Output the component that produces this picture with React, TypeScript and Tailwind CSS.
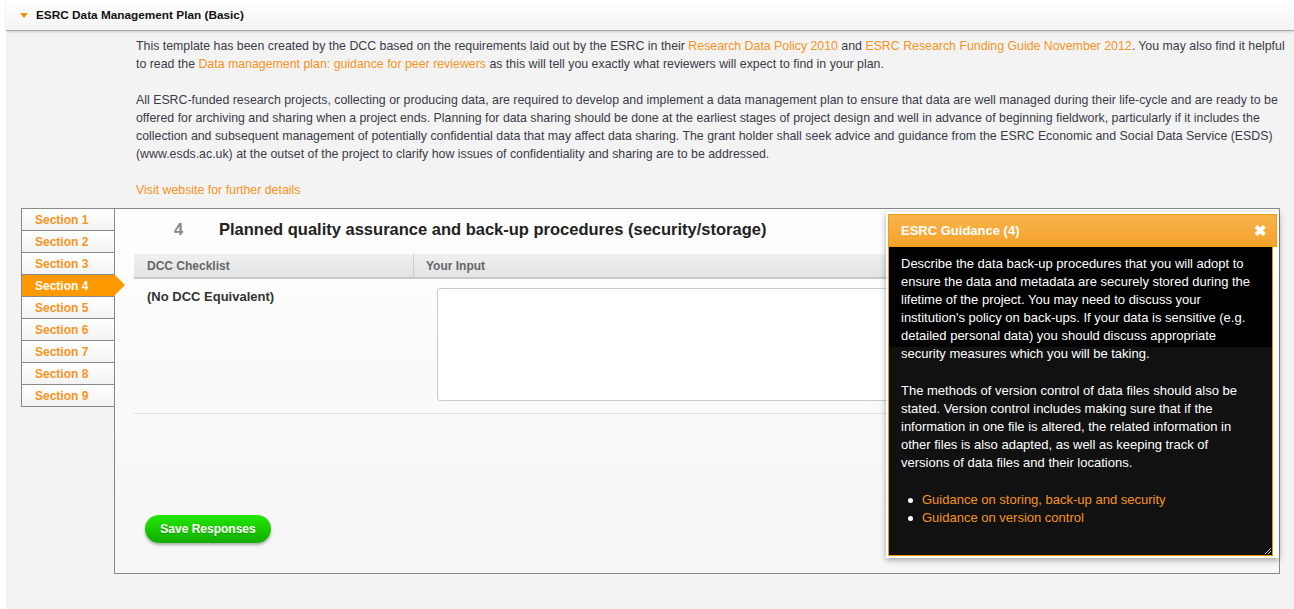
import React from "react";

const sections = [1, 2, 3, 4, 5, 6, 7, 8, 9];

function Link({ children }: { children: React.ReactNode }) {
  return <a className="text-[#f7941d]">{children}</a>;
}

export default function App() {
  return (
    <div className="min-h-[609px] bg-white font-['Liberation_Sans',Arial,sans-serif] text-[12px] leading-[18px] text-[#3b3b48]">
      <div className="ml-[6px] min-h-[609px] bg-[#f3f3f3]">
        {/* header */}
        <div className="flex h-[31px] items-center border-b border-[#a9a9a9] bg-gradient-to-b from-white to-[#f4f4f4] pl-[14px] shadow-[0_1px_2px_rgba(0,0,0,0.15)]">
          <span className="mr-[8px] h-0 w-0 border-x-[4px] border-t-[5px] border-x-transparent border-t-[#f39200]" />
          <span className="text-[11.8px] font-bold text-[#111]">ESRC Data Management Plan (Basic)</span>
        </div>

        {/* intro */}
        <div className="whitespace-nowrap pl-[130px] pt-[6px] text-[12.35px]">
          <p>
            This template has been created by the DCC based on the requirements laid out by the ESRC in their{" "}
            <Link>Research Data Policy 2010</Link> and <Link>ESRC Research Funding Guide November 2012</Link>. You may also find it helpful
            <br />
            to read the <Link>Data management plan: guidance for peer reviewers</Link> as this will tell you exactly what reviewers will expect to find in your plan.
          </p>
          <p className="mt-[18px]">
            All ESRC-funded research projects, collecting or producing data, are required to develop and implement a data management plan to ensure that data are well managed during their life-cycle and are ready to be
            <br />
            offered for archiving and sharing when a project ends. Planning for data sharing should be done at the earliest stages of project design and well in advance of beginning fieldwork, particularly if it includes the
            <br />
            collection and subsequent management of potentially confidential data that may affect data sharing. The grant holder shall seek advice and guidance from the ESRC Economic and Social Data Service (ESDS)
            <br />
            (www.esds.ac.uk) at the outset of the project to clarify how issues of confidentiality and sharing are to be addressed.
          </p>
          <p className="mt-[18px]">
            <Link>Visit website for further details</Link>
          </p>
        </div>

        {/* main box */}
        <div className="relative ml-[15px] mr-[14px] mt-[9px] flex">
          {/* section nav */}
          <div className="z-10 -mr-px flex w-[94px] shrink-0 flex-col self-start">
            {sections.map((n) => {
              const active = n === 4;
              return (
                <div
                  key={n}
                  className={
                    active
                      ? "relative -mt-px flex h-[23px] items-center border border-[#888] bg-[#f90] pl-[13px] font-bold text-white first:mt-0"
                      : "relative -mt-px flex h-[23px] items-center border border-[#888] bg-gradient-to-b from-white to-[#f3f3f3] pl-[13px] font-bold text-[#f7941d] first:mt-0"
                  }
                >
                  Section {n}
                  {active && (
                    <span className="absolute left-full top-[-1px] h-0 w-0 border-y-[11.5px] border-l-[11px] border-y-transparent border-l-[#f90]" />
                  )}
                </div>
              );
            })}
          </div>

          {/* content panel */}
          <div className="h-[366px] flex-1 border border-[#888] bg-gradient-to-b from-[#fefefe] to-[#f6f6f6] pl-[19px] pr-[18px]">
            <div className="flex h-[45px] items-center pb-[5px] text-[16.5px] font-bold">
              <span className="w-[40px]" />
              <span className="w-[45px] text-[#888]">4</span>
              <span className="text-[#222]">Planned quality assurance and back-up procedures (security/storage)</span>
            </div>
            <div className="flex h-[25px] border-b-2 border-[#c8c8c8] bg-gradient-to-b from-[#f0f0f0] to-[#e2e3e5] font-bold text-[#666]">
              <div className="flex w-[280px] items-center border-r border-[#cfcfcf] pl-[13px]">DCC Checklist</div>
              <div className="flex items-center pl-[12px]">Your Input</div>
            </div>
            <div className="flex h-[135px] border-b border-[#e2e2e2]">
              <div className="w-[303px] pl-[13px] pt-[9px] text-[13px] font-bold text-[#333]">(No DCC Equivalent)</div>
              <div className="mt-[9px] h-[113px] flex-1 rounded-[3px] border border-[#c6ccd6] bg-white" />
            </div>
            <div className="pl-[11px] pt-[101px]">
              <button className="h-[28px] w-[126px] rounded-full bg-gradient-to-b from-[#22e800] to-[#12ad00] font-bold text-white shadow-[0_2px_3px_rgba(0,0,0,0.3)] [text-shadow:0_1px_0_rgba(0,0,0,0.25)]">
                Save Responses
              </button>
            </div>
          </div>

          {/* guidance popup */}
          <div className="absolute left-[865px] top-[4px] z-20 h-[346px] w-[393px] bg-white/70 p-[2px] shadow-[0_2px_6px_rgba(0,0,0,0.35)]">
            <div className="flex h-[33px] items-center justify-between border border-[#f39c12] bg-gradient-to-b from-[#f8b44a] to-[#f5a22c] pl-[12px] pr-[9px] text-[13px] font-bold text-white">
              <span className="pt-[1px]">ESRC Guidance (4)</span>
              <span className="text-[15px] leading-none">✖</span>
            </div>
            <div className="relative mr-[4px] h-[309px] border-x border-b border-[#f39200] bg-[linear-gradient(#000_0,#000_100px,#111_100px)] pl-[12px] pt-[8px] text-[13px] text-white">
              <p className="whitespace-nowrap">
                Describe the data back-up procedures that you will adopt to
                <br />
                ensure the data and metadata are securely stored during the
                <br />
                lifetime of the project. You may need to discuss your
                <br />
                institution's policy on back-ups. If your data is sensitive (e.g.
                <br />
                detailed personal data) you should discuss appropriate
                <br />
                security measures which you will be taking.
              </p>
              <p className="mt-[19px] whitespace-nowrap">
                The methods of version control of data files should also be
                <br />
                stated. Version control includes making sure that if the
                <br />
                information in one file is altered, the related information in
                <br />
                other files is also adapted, as well as keeping track of
                <br />
                versions of data files and their locations.
              </p>
              <ul className="mt-[19px] pl-[7px]">
                {["Guidance on storing, back-up and security", "Guidance on version control"].map((g) => (
                  <li key={g} className="flex items-center">
                    <span className="mr-[9px] h-[5px] w-[5px] rounded-full bg-white" />
                    <span className="text-[#f7941d]">{g}</span>
                  </li>
                ))}
              </ul>
              <svg className="absolute bottom-[1px] right-[1px]" width="7" height="7" viewBox="0 0 7 7">
                <path d="M1 7 L7 1 M4 7 L7 4" stroke="#ccc" strokeWidth="1" />
              </svg>
            </div>
          </div>
        </div>
      </div>
    </div>
  );
}
